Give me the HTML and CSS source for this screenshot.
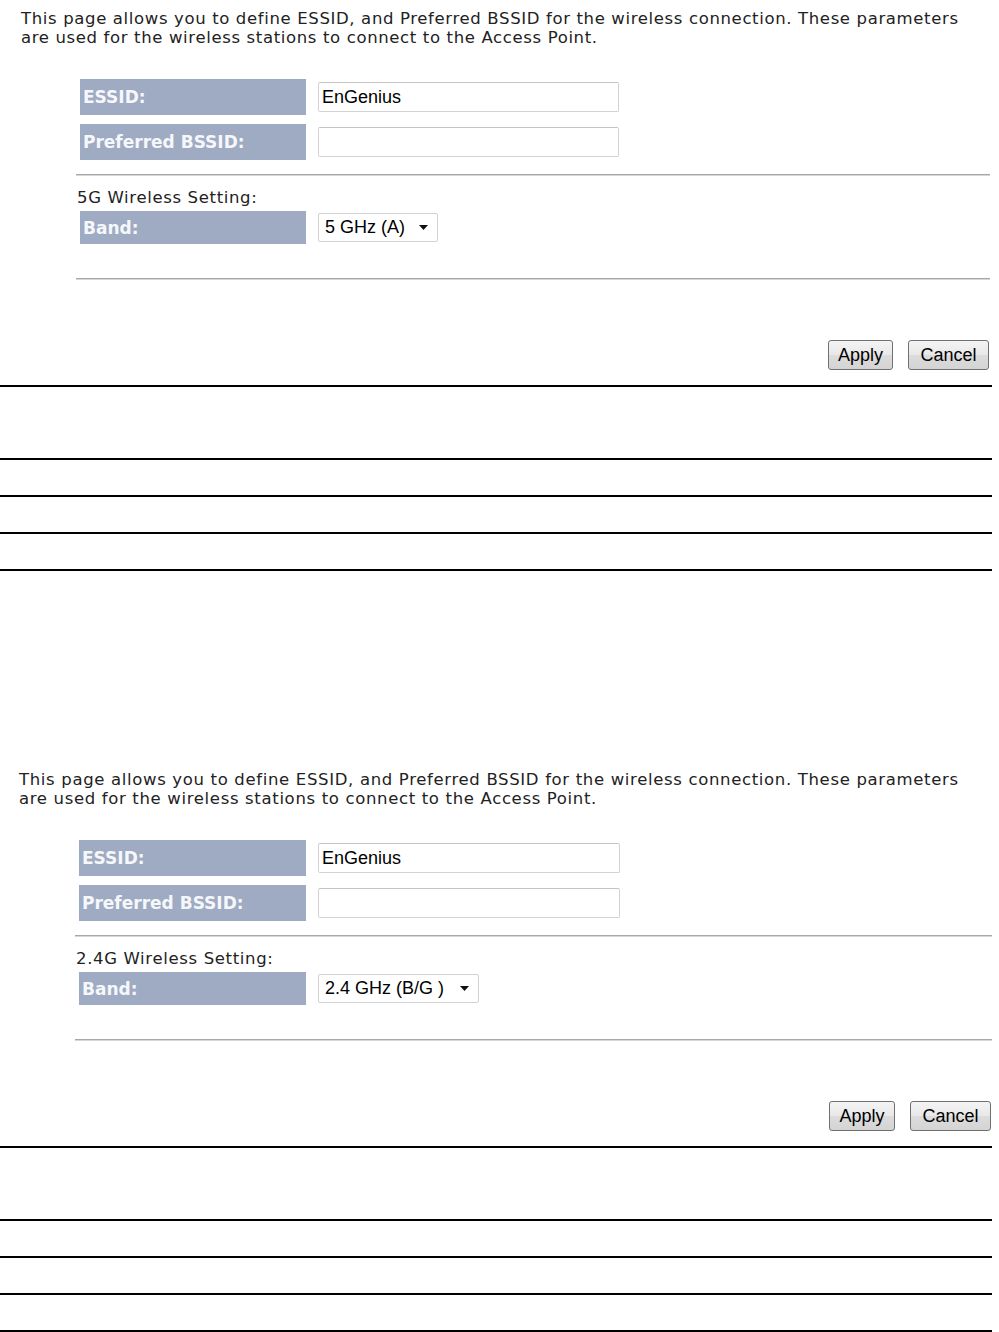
FILE: index.html
```html
<!DOCTYPE html>
<html>
<head>
<meta charset="utf-8">
<title>Wireless Basic Settings</title>
<link rel="stylesheet" href="styles.css">
</head>
<body>
<div class="doc">
  <section class="shot">
    <p class="intro">This page allows you to define ESSID, and Preferred BSSID for the wireless connection. These parameters<br>are used for the wireless stations to connect to the Access Point.</p>
    <div class="form">
      <div class="row">
        <div class="label">ESSID:</div>
        <input class="text" type="text" value="EnGenius">
      </div>
      <div class="row">
        <div class="label">Preferred BSSID:</div>
        <input class="text" type="text" value="">
      </div>
      <div class="rule"></div>
      <div class="subhead">5G Wireless Setting:</div>
      <div class="row row-band">
        <div class="label">Band:</div>
        <div class="select"><span>5 GHz (A)</span><svg class="caret" width="9" height="5" viewBox="0 0 9 5"><path d="M0 0h9L4.5 5z"/></svg></div>
      </div>
      <div class="rule rule-low"></div>
      <div class="actions">
        <button class="btn btn-apply" type="button">Apply</button>
        <button class="btn btn-cancel" type="button">Cancel</button>
      </div>
    </div>
  </section>
  <div class="ruled">
    <div class="ruled-row tall"></div>
    <div class="ruled-row"></div>
    <div class="ruled-row"></div>
    <div class="ruled-row"></div>
  </div>

  <section class="shot shot-b">
    <p class="intro">This page allows you to define ESSID, and Preferred BSSID for the wireless connection. These parameters<br>are used for the wireless stations to connect to the Access Point.</p>
    <div class="form">
      <div class="row">
        <div class="label">ESSID:</div>
        <input class="text" type="text" value="EnGenius">
      </div>
      <div class="row">
        <div class="label">Preferred BSSID:</div>
        <input class="text" type="text" value="">
      </div>
      <div class="rule"></div>
      <div class="subhead">2.4G Wireless Setting:</div>
      <div class="row row-band">
        <div class="label">Band:</div>
        <div class="select"><span>2.4 GHz (B/G )</span><svg class="caret" width="9" height="5" viewBox="0 0 9 5"><path d="M0 0h9L4.5 5z"/></svg></div>
      </div>
      <div class="rule rule-low"></div>
      <div class="actions">
        <button class="btn btn-apply" type="button">Apply</button>
        <button class="btn btn-cancel" type="button">Cancel</button>
      </div>
    </div>
  </section>
  <div class="ruled ruled-last">
    <div class="ruled-row tall"></div>
    <div class="ruled-row"></div>
    <div class="ruled-row"></div>
    <div class="ruled-row"></div>
  </div>
</div>
</body>
</html>
```
FILE: styles.css
```css
html, body {
  margin: 0;
  padding: 0;
  background: #fff;
}

.doc {
  width: 992px;
}

.shot {
  display: flex;
  flex-direction: column;
}

.intro {
  margin: 9px 0 0 21px;
  font-family: "DejaVu Sans", Verdana, sans-serif;
  font-size: 16.5px;
  letter-spacing: 0.64px;
  line-height: 19px;
  color: #222;
  white-space: nowrap;
}

.shot-b .intro {
  margin-left: 19px;
  letter-spacing: 0.66px;
}

.form {
  margin: 32px 0 0 76px;
  width: 914px;
  display: flex;
  flex-direction: column;
}

.shot-b .form {
  margin-left: 75px;
  width: 917px;
}

.row {
  display: flex;
  align-items: center;
  gap: 12px;
  height: 36px;
  padding-left: 4px;
}

.row + .row {
  margin-top: 9px;
}

.row-band {
  height: 33px;
}

.label {
  width: 226px;
  align-self: stretch;
  display: flex;
  align-items: center;
  padding-left: 3px;
  box-sizing: border-box;
  background: #9eabc2;
  color: #f6f7fa;
  font-family: "DejaVu Sans", Verdana, sans-serif;
  font-weight: bold;
  font-size: 17px;
}

.shot-b .label {
  width: 227px;
}

.text {
  width: 301px;
  height: 30px;
  box-sizing: border-box;
  margin: 0;
  padding: 0 0 0 3px;
  border: 1px solid #d2d2d2;
  border-top-color: #c4c4c4;
  border-radius: 2px;
  font-family: "Liberation Sans", Arial, sans-serif;
  font-size: 18px;
  color: #000;
  background: #fff;
  outline: none;
}

.shot-b .text {
  width: 302px;
}

.rule {
  margin-top: 14px;
  height: 0;
  border-top: 1px solid #a8a8a8;
  border-bottom: 1px solid #d6d6d6;
}

.rule-low {
  margin-top: 34px;
}

.subhead {
  margin: 12px 0 4px 1px;
  font-family: "DejaVu Sans", Verdana, sans-serif;
  font-size: 16.5px;
  letter-spacing: 0.65px;
  line-height: 19px;
  color: #222;
}

.select {
  display: flex;
  align-items: center;
  gap: 14px;
  height: 29px;
  box-sizing: border-box;
  padding: 0 9px 0 6px;
  border: 1px solid #d2d2d2;
  border-radius: 2px;
  background: #fff;
  font-family: "Liberation Sans", Arial, sans-serif;
  font-size: 18px;
  color: #000;
}

.shot-b .select {
  gap: 16px;
}

.caret {
  display: block;
  fill: #111;
}

.actions {
  margin: 60px 1px 15px 0;
  display: flex;
  justify-content: flex-end;
  gap: 15px;
}

.btn {
  height: 30px;
  margin: 0;
  padding: 0;
  box-sizing: border-box;
  border: 1px solid #707070;
  border-radius: 3px;
  background: linear-gradient(#f4f4f4, #e8e8e8 50%, #dcdcdc 51%, #d4d4d4);
  font-family: "Liberation Sans", Arial, sans-serif;
  font-size: 18px;
  color: #000;
  line-height: 28px;
}

.btn-apply {
  width: 65px;
}

.btn-cancel {
  width: 81px;
}

.shot-b .btn-apply {
  width: 66px;
}

.ruled {
  border-top: 2px solid #000;
  margin-bottom: 190px;
}

.ruled-last {
  margin-bottom: 0;
}

.ruled-row {
  height: 35px;
  border-bottom: 2px solid #000;
}

.ruled-row.tall {
  height: 71px;
}
```
